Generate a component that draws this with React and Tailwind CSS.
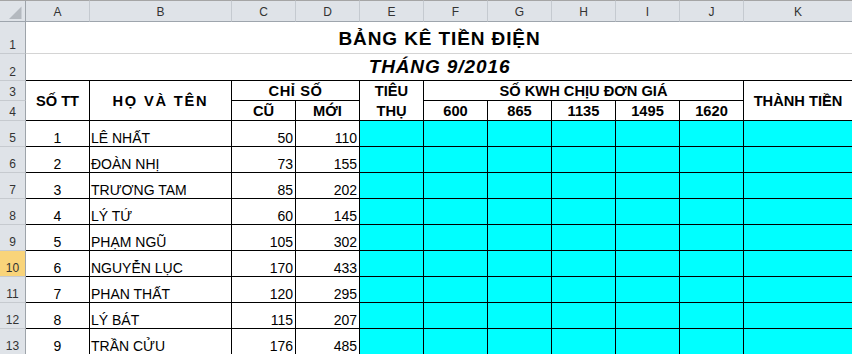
import React from "react";

const rows = [
  [1, "LÊ NHẤT", 50, 110],
  [2, "ĐOÀN NHỊ", 73, 155],
  [3, "TRƯƠNG TAM", 85, 202],
  [4, "LÝ TỨ", 60, 145],
  [5, "PHẠM NGŨ", 105, 302],
  [6, "NGUYỄN LỤC", 170, 433],
  [7, "PHAN THẤT", 120, 295],
  [8, "LÝ BÁT", 115, 207],
  [9, "TRẦN CỬU", 176, 485],
];

const colLetters = ["A", "B", "C", "D", "E", "F", "G", "H", "I", "J", "K"];

function RowHead({ n, active }) {
  return (
    <div
      className={
        active
          ? "flex items-end justify-center border-r border-b border-r-[#9ea4aa] border-b-[#c6cacf] bg-[#f9d47a] pb-[1px] text-[12px] leading-[14px] text-[#333]"
          : "flex items-end justify-center border-r border-b border-r-[#9ea4aa] border-b-[#c6cacf] bg-[#dfe3e8] pb-[1px] text-[12px] leading-[14px] text-[#333]"
      }
    >
      {n}
    </div>
  );
}

export default function App() {
  return (
    <div className="h-[354px] w-[852px] overflow-hidden bg-white font-['Liberation_Sans',Arial,sans-serif] text-black">
      <div className="grid w-[853px] grid-cols-[26px_64px_142px_64px_64px_64px_64px_64px_64px_64px_64px_109px] grid-rows-[22px_32px_27px_20px_20px_repeat(9,26px)]">
        {/* column header row */}
        <div className="relative border-t border-r border-b border-t-[#a5a5a5] border-r-[#9ea4aa] border-b-[#9ea5ad] bg-[#dfe3e8]">
          <svg className="absolute left-0 top-0" width="25" height="20" viewBox="0 0 25 20">
            <polygon points="21.5,5.5 21.5,18 9,18" fill="#b4b9bf" />
          </svg>
        </div>
        {colLetters.map((c) => (
          <div
            key={c}
            className="flex items-center justify-center border-t border-r border-b border-t-[#a5a5a5] border-r-[#c5cad0] border-b-[#9ea5ad] bg-[#dfe3e8] pt-[2px] text-[12px] leading-[14px] text-[#333]"
          >
            {c}
          </div>
        ))}

        {/* row 1 */}
        <RowHead n={1} />
        <div className="col-span-11 flex items-end justify-center border-b border-b-[#d4d4d4] pb-[3px] text-[19px] font-bold leading-[22px] tracking-[0.9px]">
          BẢNG KÊ TIỀN ĐIỆN
        </div>

        {/* row 2 */}
        <RowHead n={2} />
        <div className="col-span-11 flex items-end justify-center border-b border-b-black pb-[2px] text-[19px] font-bold italic leading-[22px] tracking-[0.9px]">
          THÁNG 9/2016
        </div>

        {/* row 3 */}
        <RowHead n={3} />
        <div className="row-span-2 flex items-center justify-center border-r border-b border-black text-[14.67px] font-bold leading-[18px]">
          SỐ TT
        </div>
        <div className="row-span-2 flex items-center justify-center border-r border-b border-black text-[14.67px] font-bold leading-[18px] tracking-[1.8px]">
          HỌ VÀ TÊN
        </div>
        <div className="col-span-2 flex items-center justify-center border-r border-b border-black text-[14.67px] font-bold leading-[18px] tracking-[0.6px]">
          CHỈ SỐ
        </div>
        <div className="row-span-2 flex flex-col items-center border-r border-b border-black text-[14.67px] font-bold leading-[20px]">
          <span>TIÊU</span>
          <span>THỤ</span>
        </div>
        <div className="col-span-5 flex items-center justify-center border-r border-b border-black text-[14.67px] font-bold leading-[18px]">
          SỐ KWH CHỊU ĐƠN GIÁ
        </div>
        <div className="row-span-2 flex items-center justify-center border-r border-b border-black text-[14.67px] font-bold leading-[18px]">
          THÀNH TIỀN
        </div>

        {/* row 4 */}
        <RowHead n={4} />
        <div className="flex items-center justify-center border-r border-b border-black text-[14.67px] font-bold leading-[18px]">
          CŨ
        </div>
        <div className="flex items-center justify-center border-r border-b border-black text-[14.67px] font-bold leading-[18px]">
          MỚI
        </div>
        {[600, 865, 1135, 1495, 1620].map((p) => (
          <div
            key={p}
            className="flex items-center justify-center border-r border-b border-black text-[14.67px] font-bold leading-[18px]"
          >
            {p}
          </div>
        ))}

        {/* data rows */}
        {rows.map(([stt, name, cu, moi], i) => (
          <React.Fragment key={stt}>
            <RowHead n={i + 5} active={i + 5 === 10} />
            <div className="flex items-end justify-center border-r border-b border-black text-[14px] leading-[16px]">
              {stt}
            </div>
            <div className="flex items-end justify-start border-r border-b border-black pl-[1px] text-[14px] leading-[16px]">
              {name}
            </div>
            <div className="flex items-end justify-end border-r border-b border-black pr-[2px] text-[14px] leading-[16px]">
              {cu}
            </div>
            <div className="flex items-end justify-end border-r border-b border-black pr-[2px] text-[14px] leading-[16px]">
              {moi}
            </div>
            <div className="border-r border-b border-black bg-[#00ffff]" />
            <div className="border-r border-b border-black bg-[#00ffff]" />
            <div className="border-r border-b border-black bg-[#00ffff]" />
            <div className="border-r border-b border-black bg-[#00ffff]" />
            <div className="border-r border-b border-black bg-[#00ffff]" />
            <div className="border-r border-b border-black bg-[#00ffff]" />
            <div className="border-r border-b border-black bg-[#00ffff]" />
          </React.Fragment>
        ))}
      </div>
    </div>
  );
}
